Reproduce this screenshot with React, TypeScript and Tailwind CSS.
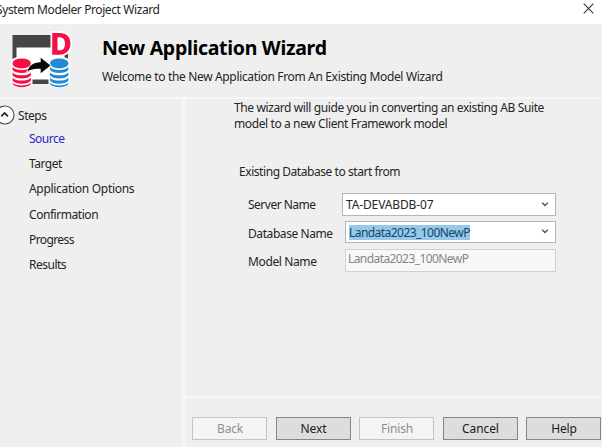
import type { ReactNode } from "react";

function Disks({ x, color }: { x: number; color: string }) {
  return (
    <g transform={`translate(${x} 58)`}>
      <path d="M-1.5 4C-1.5 -3 20 -3 20 4V25C20 31 -1.5 31 -1.5 25Z" fill="#fff" />
      <g fill={color}>
        <ellipse cx="9.2" cy="5.4" rx="9.2" ry="5" />
        <path d="M0 9C3 12.9 15.4 12.9 18.4 9V11.8C15.4 16.1 3 16.1 0 11.8Z" />
        <path d="M0 14.4C3 18.2 15.4 18.2 18.4 14.4V17.2C15.4 21.5 3 21.5 0 17.2Z" />
        <path d="M0 19.7C3 23.5 15.4 23.5 18.4 19.7V22.4C15.4 26.8 3 26.8 0 22.4Z" />
        <path d="M0 24.8C3 28.4 15.4 28.4 18.4 24.8V26C15.4 30.2 3 30.2 0 26Z" />
      </g>
    </g>
  );
}

function Logo() {
  return (
    <svg className="block h-[60px] w-[62px] shrink-0" viewBox="10 30 62 60">
      <path d="M12.5 35H68V84H12.5Z" fill="#454547" />
      <path d="M16.5 47.5H64.5V79.5H16.5Z" fill="#fff" />
      <path d="M50.5 31H62C69 31 72 37 72 43.5C72 51 68 56 61 56H50.5Z" fill="#fff" />
      <path
        d="M52.2 33H59.5C66.5 33 70.4 37 70.4 43.5C70.4 50.5 66 54.7 59 54.7H52.2ZM57.5 37.3V50.3H59.5C63 50.3 65 48 65 43.7C65 39.6 63 37.3 59.5 37.3Z"
        fill="#f50f43"
        fillRule="evenodd"
      />
      <Disks x={12.5} color="#f50f43" />
      <Disks x={50} color="#218bd3" />
      <path
        d="M27.3 71.5C29 65.5 33.5 62 40.7 62.2V57.7L50.5 65.5L40.7 73.3V68.8C35 68.4 31 69 27.3 71.5Z"
        fill="#080808"
        stroke="#fff"
        strokeWidth="1.4"
        paintOrder="stroke"
      />
    </svg>
  );
}

function Chevron() {
  return (
    <svg className="h-[5px] w-[8px] shrink-0" viewBox="0 0 8 5" fill="none" stroke="#555" strokeWidth="1.4">
      <path d="M1.2 .8L4 3.6L6.8 .8" />
    </svg>
  );
}

function Button({ children, disabled = false }: { children: ReactNode; disabled?: boolean }) {
  return (
    <button
      disabled={disabled}
      className={`flex h-[23px] w-[75px] shrink-0 items-center justify-center border pt-px pl-px ${
        disabled
          ? "border-[#bfc4c4] bg-[#f4f4f4] tracking-[-0.2px] text-[#8b9191]"
          : "border-[#858585] bg-[#dddddd] tracking-[-0.1px] text-[#1b1b1b]"
      }`}
    >
      {children}
    </button>
  );
}

const steps = [
  { label: "Source", style: "text-[#2a1fc8] tracking-[-0.5px]" },
  { label: "Target", style: "tracking-[-0.5px]" },
  { label: "Application Options", style: "tracking-[-0.3px]" },
  { label: "Confirmation", style: "tracking-[-0.45px]" },
  { label: "Progress", style: "tracking-[-0.6px]" },
  { label: "Results", style: "tracking-[-0.5px]" },
];

export default function App() {
  return (
    <div className="flex h-[447px] w-[602px] flex-col overflow-hidden bg-[#efefef] font-['Noto_Sans',sans-serif] text-[12px] leading-[16px] whitespace-nowrap text-[#252525]">
      <div className="flex h-[24px] shrink-0 justify-between bg-white pr-[8px]">
        <span className="-ml-[4px] pt-[2px] tracking-[-0.4px]">System Modeler Project Wizard</span>
        <svg className="mt-[3px] h-[11px] w-[11px]" viewBox="0 0 11 11" stroke="#333" strokeWidth="1.1">
          <path d="M.7 .7L10.3 10.3M10.3 .7L.7 10.3" />
        </svg>
      </div>
      <header className="flex h-[73px] shrink-0 pt-[6px] pl-[10px]">
        <Logo />
        <div className="pt-[6px] pl-[30px]">
          <h1 className="text-[19.5px] leading-[24px] font-bold tracking-[-0.3px] text-black">
            New Application Wizard
          </h1>
          <p className="mt-[9px] tracking-[-0.34px]">Welcome to the New Application From An Existing Model Wizard</p>
        </div>
      </header>
      <div className="flex min-h-0 flex-1 border-t-2 border-[#f7f7f7]">
        <aside className="w-[185px] shrink-0 border-r-[3px] border-[#f6f6f6] pt-[6px]">
          <div className="flex h-[20px] items-center">
            <svg className="-ml-[5px] h-[20px] w-[20px]" viewBox="0 0 20 20" fill="none">
              <circle cx="10" cy="10" r="9" fill="#fcfcfc" stroke="#4a4a4a" strokeWidth="1.1" />
              <path d="M6.3 11.3L9.6 8L12.9 11.3" stroke="#222" strokeWidth="1.7" />
            </svg>
            <span className="ml-[3px] pt-[2px] tracking-[-0.45px]">Steps</span>
          </div>
          <ul className="pt-[1.3px] pl-[29px]">
            {steps.map((s) => (
              <li key={s.label} className={`h-[25.1px] leading-[25px] ${s.style}`}>
                {s.label}
              </li>
            ))}
          </ul>
        </aside>
        <main className="flex min-w-0 flex-1 flex-col">
          <section className="h-[297px] shrink-0 pt-px pl-[49px]">
            <p className="tracking-[-0.39px]">The wizard will guide you in converting an existing AB Suite</p>
            <p className="tracking-[-0.39px]">model to a new Client Framework model</p>
            <h2 className="mt-[32px] pl-[5px] tracking-[-0.44px]">Existing Database to start from</h2>
            <div className="mt-[13px] flex w-[322px] flex-col pl-[14px]">
              <div className="flex h-[23px] items-center justify-between">
                <label className="tracking-[-0.5px]">Server Name</label>
                <div className="flex h-[23px] w-[214px] items-center justify-between border border-[#b4b6b9] bg-white pr-[6px] pl-[3px]">
                  <span className="pt-px tracking-[-0.13px]">TA-DEVABDB-07</span>
                  <Chevron />
                </div>
              </div>
              <div className="mt-[5px] flex h-[22px] items-center justify-between">
                <label className="pt-[3px] tracking-[-0.42px]">Database Name</label>
                <div className="flex h-[22px] w-[211px] items-center justify-between border border-[#b4b6b9] bg-white pr-[6px] pb-px pl-[3px]">
                  <span className="mt-px h-[15px] bg-[#94c8ed] leading-[16px] tracking-[-0.55px] text-[#174766]">
                    Landata2023_100NewP
                  </span>
                  <Chevron />
                </div>
              </div>
              <div className="mt-[6px] flex h-[23px] items-center justify-between">
                <label className="pt-[2px] tracking-[-0.38px]">Model Name</label>
                <div className="flex h-[23px] w-[211px] items-center border border-[#cfd2d3] bg-[#f8f8f8] pb-[4px] pl-[2px] text-[#858585]">
                  <span className="tracking-[-0.58px]">Landata2023_100NewP</span>
                </div>
              </div>
            </div>
          </section>
          <footer className="flex flex-1 gap-[8.5px] border-t-2 border-[#f8f8f8] pt-[19px] pl-[7px]">
            <Button disabled>Back</Button>
            <Button>Next</Button>
            <Button disabled>Finish</Button>
            <Button>Cancel</Button>
            <Button>Help</Button>
          </footer>
        </main>
      </div>
    </div>
  );
}
